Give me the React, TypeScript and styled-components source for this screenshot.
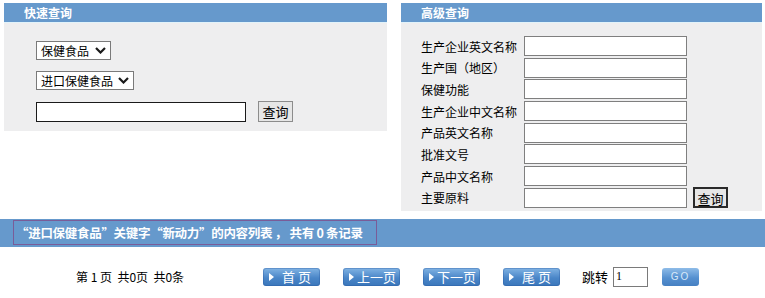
import React from 'react';
import styled, {createGlobalStyle} from "styled-components";

const GlobalStyle = createGlobalStyle`
  body {
    margin: 0;
    background: #ffffff;
    font-family: "Liberation Sans", "Noto Sans CJK SC", sans-serif;
    color: #000;
  }
`

const advancedFields = [
    "生产企业英文名称",
    "生产国（地区）",
    "保健功能",
    "生产企业中文名称",
    "产品英文名称",
    "批准文号",
    "产品中文名称",
    "主要原料",
]

const pageButtons = ["首 页", "上一页", "下一页", "尾 页"]

const Chevron = () => (
    <ChevronIcon width="11" height="7" viewBox="0 0 11 7">
        <path d="M1 1 L5.5 5.5 L10 1" fill="none" stroke="#1a1a1a" strokeWidth="2.2"/>
    </ChevronIcon>
)

const DropDown = ({width, value}: { width: number, value: string }) => (
    <SelectWrap width={width}>
        <Select>
            <option>{value}</option>
        </Select>
        <Chevron/>
    </SelectWrap>
)

export default function App() {
    return (
        <Page>
            <GlobalStyle/>
            <TopRow>
                <Panel width={383}>
                    <PanelTitle>快速查询</PanelTitle>
                    <QuickBody>
                        <DropDown width={75} value="保健食品"/>
                        <DropDown width={98} value="进口保健食品"/>
                        <InlineRow>
                            <TextInput width={210} dark/>
                            <QueryButton>查询</QueryButton>
                        </InlineRow>
                    </QuickBody>
                </Panel>
                <Panel width={361}>
                    <PanelTitle>高级查询</PanelTitle>
                    <AdvancedBody>
                        {advancedFields.map((label, i) => (
                            <FieldRow key={label}>
                                <FieldLabel>{label}</FieldLabel>
                                <TextInput width={163}/>
                                {i === advancedFields.length - 1 && <QueryButton focused>查询</QueryButton>}
                            </FieldRow>
                        ))}
                    </AdvancedBody>
                </Panel>
            </TopRow>
            <ResultBar>
                <ResultBox>“进口保健食品”关键字“新动力”的内容列表 ， 共有 0 条记录</ResultBox>
            </ResultBar>
            <Pager>
                <PageInfo>第 1 页  共0页  共0条</PageInfo>
                {pageButtons.map((label) => (
                    <PageButton key={label}>{label}</PageButton>
                ))}
                <JumpLabel>跳转</JumpLabel>
                <JumpInput defaultValue="1"/>
                <GoButton>GO</GoButton>
            </Pager>
        </Page>
    );
}

const Page = styled.div`
  width: 765px;
  padding-top: 3px;
`

const TopRow = styled.div`
  display: flex;
  align-items: flex-start;
  gap: 14px;
  padding-left: 4px;
`

const Panel = styled.section<{ width: number }>`
  width: ${props => props.width}px;
  background: #eeeeef;
`

const PanelTitle = styled.div`
  height: 19px;
  line-height: 19px;
  padding-left: 20px;
  background: #6699cc;
  border-bottom: 1px solid #e2f3fa;
  color: #ffffff;
  font-family: "Noto Sans CJK SC", sans-serif;
  font-size: 12px;
  font-weight: bold;
`

const QuickBody = styled.div`
  display: flex;
  flex-direction: column;
  align-items: flex-start;
  gap: 11px;
  padding: 18px 0 9px 32px;
`

const SelectWrap = styled.div<{ width: number }>`
  position: relative;
  box-sizing: border-box;
  width: ${props => props.width}px;
  height: 19px;
  border: 1px solid #7a7a7a;
  background: #ffffff;
`

const Select = styled.select`
  appearance: none;
  display: block;
  width: 100%;
  height: 100%;
  padding: 0 0 0 4px;
  border: none;
  outline: none;
  background: transparent;
  font-family: "Noto Sans CJK SC", sans-serif;
  font-size: 12px;
  line-height: 17px;
  color: #000;
`

const ChevronIcon = styled.svg`
  position: absolute;
  right: 4px;
  top: 5px;
  pointer-events: none;
`

const InlineRow = styled.div`
  display: flex;
  align-items: center;
  gap: 12px;
`

const TextInput = styled.input<{ width: number, dark?: boolean }>`
  box-sizing: border-box;
  width: ${props => props.width}px;
  height: 20px;
  margin: 0;
  border: 1px solid ${props => props.dark ? "#1a1a1a" : "#7f7f7f"};
  background: #ffffff;
`

const QueryButton = styled.button<{ focused?: boolean }>`
  box-sizing: border-box;
  width: 35px;
  height: 21px;
  margin-left: ${props => props.focused ? "6px" : "0"};
  padding: 0;
  border: ${props => props.focused ? "2px solid #2a2a2a" : "1px solid #8c8c8c"};
  background: #e6e6e6;
  font-family: "Noto Sans CJK SC", sans-serif;
  font-size: 13px;
  color: #000;
`

const AdvancedBody = styled.div`
  display: flex;
  flex-direction: column;
  gap: 1.7px;
  padding: 13px 0 3px 20px;
`

const FieldRow = styled.div`
  display: flex;
  align-items: center;
  height: 20px;
`

const FieldLabel = styled.span`
  width: 103px;
  font-family: "Noto Sans CJK SC", sans-serif;
  font-size: 12px;
  white-space: nowrap;
`

const ResultBar = styled.div`
  margin-top: 8px;
  height: 28px;
  padding: 1px 0 0 13px;
  box-sizing: border-box;
  background: #6699cc;
`

const ResultBox = styled.div`
  display: inline-block;
  box-sizing: border-box;
  width: 364px;
  height: 25px;
  line-height: 23px;
  padding-left: 2px;
  border: 1px solid #7a5c98;
  color: #ffffff;
  font-family: "Noto Sans CJK SC", sans-serif;
  font-size: 12.5px;
  font-weight: bold;
  white-space: nowrap;
  letter-spacing: -0.3px;
`

const Pager = styled.div`
  display: flex;
  align-items: center;
  height: 20px;
  margin-top: 20px;
  padding-left: 76px;
  font-family: "Noto Sans CJK SC", sans-serif;
  font-size: 12px;
`

const PageInfo = styled.span`
  width: 187px;
  white-space: pre;
`

const PageButton = styled.button`
  position: relative;
  box-sizing: border-box;
  width: 57px;
  height: 18px;
  margin-right: 23px;
  padding: 0 0 0 10px;
  border: none;
  border-radius: 3px;
  background: linear-gradient(#82b4e4, #4a86c8 55%, #3a76ba);
  box-shadow: inset 0 0 0 1px rgba(40, 90, 160, 0.35);
  color: #ffffff;
  font-family: "Noto Sans CJK SC", sans-serif;
  font-size: 13px;
  line-height: 18px;
  white-space: pre;

  &::before {
    content: "";
    position: absolute;
    left: 6px;
    top: 5px;
    border-style: solid;
    border-width: 4px 0 4px 5px;
    border-color: transparent transparent transparent #ffffff;
  }
`

const JumpLabel = styled.span`
  margin-left: -1px;
  font-size: 13px;
`

const JumpInput = styled.input`
  box-sizing: border-box;
  width: 35px;
  height: 20px;
  margin: 0 14px 0 5px;
  padding: 0 2px;
  border: 1px solid #7a7a7a;
  font-family: "Liberation Serif", serif;
  font-size: 12px;
`

const GoButton = styled.button`
  box-sizing: border-box;
  width: 37px;
  height: 18px;
  padding: 0;
  border: none;
  border-radius: 3px;
  background: linear-gradient(#8ebce8, #5590d0 55%, #4680c2);
  color: #d8e8f8;
  font-family: "Liberation Sans", sans-serif;
  font-size: 10px;
  letter-spacing: 2px;
`
